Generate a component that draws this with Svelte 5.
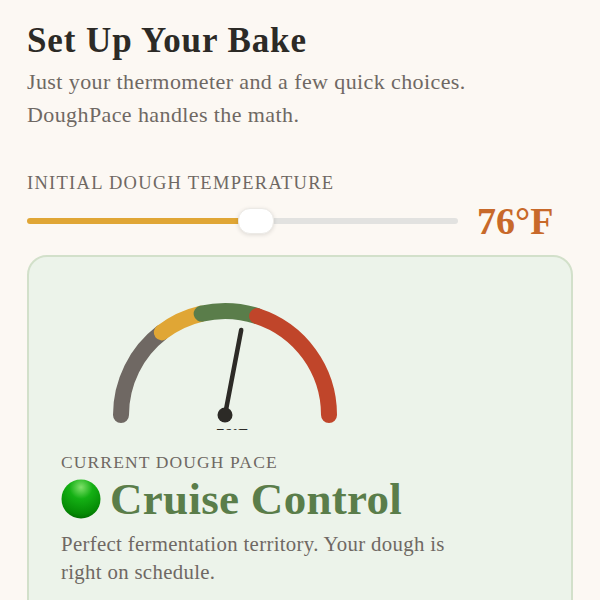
<script lang="ts">
    // Fermentation gauge runs across this temperature span
    const GAUGE_MIN = 62;
    const GAUGE_MAX = 87;
    const CX = 130;
    const CY = 120;
    const R = 104;

    const zones = [
        { from: 62, to: 69.3, color: "#6f6863" },
        { from: 69.3, to: 72.7, color: "#e0a635" },
        { from: 72.7, to: 77, color: "#5a7d4a" },
        { from: 77, to: 87, color: "#c0452a" },
    ];

    let temp = $state(76);

    const sliderPct = $derived(((temp - 60) / 30) * 100);

    function point(t: number, radius: number) {
        const a = (Math.PI * (t - GAUGE_MIN)) / (GAUGE_MAX - GAUGE_MIN);
        return {
            x: CX - radius * Math.cos(a),
            y: CY - radius * Math.sin(a),
        };
    }

    function arc(from: number, to: number) {
        const s = point(from, R);
        const e = point(to, R);
        return `M ${s.x} ${s.y} A ${R} ${R} 0 0 1 ${e.x} ${e.y}`;
    }

    const tip = $derived(point(Math.min(temp, GAUGE_MAX), 86.5));
</script>

<main class="page">
    <h1>Set Up Your Bake</h1>
    <p class="intro">
        Just your thermometer and a few quick choices.<br />DoughPace handles
        the math.
    </p>

    <label class="field-label" for="temp">Initial Dough Temperature</label>
    <div class="slider-row">
        <input
            id="temp"
            type="range"
            min="60"
            max="90"
            bind:value={temp}
            style="--fill: {sliderPct}%"
        />
        <span class="temp-value">{temp}°F</span>
    </div>

    <section class="card">
        <svg class="gauge" width="260" height="135" viewBox="0 0 260 135">
            {#each zones as zone}
                <path
                    d={arc(zone.from, zone.to)}
                    fill="none"
                    stroke={zone.color}
                    stroke-width="16"
                    stroke-linecap="round"
                />
            {/each}
            <line
                x1={CX}
                y1={CY}
                x2={tip.x}
                y2={tip.y}
                stroke="#2c2a26"
                stroke-width="4.5"
                stroke-linecap="round"
            />
            <circle cx={CX} cy={CY} r="7.5" fill="#2c2a26" />
            <text x="137" y="145" text-anchor="middle">{temp}°F</text>
        </svg>

        <div class="pace-label">Current Dough Pace</div>
        <div class="pace-name">
            <svg class="dot" width="40" height="40" viewBox="0 0 40 40">
                <defs>
                    <radialGradient id="dotFill" cx="50%" cy="20%" r="85%">
                        <stop offset="0" stop-color="#7fe06a" />
                        <stop offset="0.35" stop-color="#14b014" />
                        <stop offset="0.8" stop-color="#058a05" />
                        <stop offset="1" stop-color="#006400" />
                    </radialGradient>
                </defs>
                <circle cx="20" cy="20" r="19.5" fill="url(#dotFill)" />
            </svg>
            <span>Cruise Control</span>
        </div>
        <p class="pace-note">
            Perfect fermentation territory. Your dough is<br />right on schedule.
        </p>
    </section>
</main>

<style>
    :global(body) {
        margin: 0;
        background: #fcf8f3;
        font-family: "Liberation Serif", Georgia, serif;
        overflow: hidden;
    }

    .page {
        height: 600px;
        overflow: hidden;
        padding: 22px 27px 0;
        box-sizing: border-box;
    }

    h1 {
        margin: 0;
        font-size: 35px;
        line-height: 38px;
        letter-spacing: 0.9px;
        font-weight: 700;
        color: #2c2a26;
    }

    .intro {
        margin: 5px 0 0;
        font-size: 22px;
        line-height: 33px;
        letter-spacing: 0.4px;
        color: #6f6863;
    }

    .field-label {
        display: block;
        margin-top: 41px;
        font-size: 18.5px;
        line-height: 22px;
        letter-spacing: 1.28px;
        text-transform: uppercase;
        color: #6f6863;
    }

    .slider-row {
        display: flex;
        align-items: center;
        gap: 19px;
        margin-top: 7px;
        height: 40px;
    }

    input[type="range"] {
        appearance: none;
        -webkit-appearance: none;
        flex: none;
        width: 431px;
        height: 6px;
        margin: 0;
        border-radius: 3px;
        outline: none;
        background: linear-gradient(
            to right,
            #e0a635 var(--fill),
            #e2e2e0 var(--fill)
        );
    }

    input[type="range"]::-webkit-slider-thumb {
        -webkit-appearance: none;
        width: 36px;
        height: 26px;
        border-radius: 12px;
        background: #fff;
        border: 1px solid #eceae6;
        box-shadow: 0 1px 4px rgba(0, 0, 0, 0.12);
        cursor: pointer;
    }

    .temp-value {
        font-size: 38px;
        font-weight: 700;
        line-height: 40px;
        color: #c8692a;
    }

    .card {
        margin-top: 14px;
        padding: 38px 32px 40px;
        background: #ecf3ea;
        border: 2px solid #d2e0ca;
        border-radius: 20px;
    }

    .gauge {
        display: block;
        margin-left: 34px;
        overflow: hidden;
    }

    .gauge text {
        font-size: 16px;
        font-weight: 700;
        fill: #2c2a26;
    }

    .pace-label {
        margin-top: 21px;
        font-size: 17.5px;
        line-height: 22px;
        letter-spacing: 1.13px;
        text-transform: uppercase;
        color: #6f6863;
    }

    .pace-name {
        display: flex;
        align-items: center;
        gap: 9px;
        margin-top: 1px;
        font-size: 45px;
        line-height: 50px;
        letter-spacing: 0.3px;
        font-weight: 700;
        color: #5a7d4a;
    }

    .dot {
        flex: none;
    }

    .pace-note {
        margin: 6px 0 0;
        font-size: 20.8px;
        line-height: 28px;
        letter-spacing: 0.33px;
        color: #6f6863;
    }
</style>
